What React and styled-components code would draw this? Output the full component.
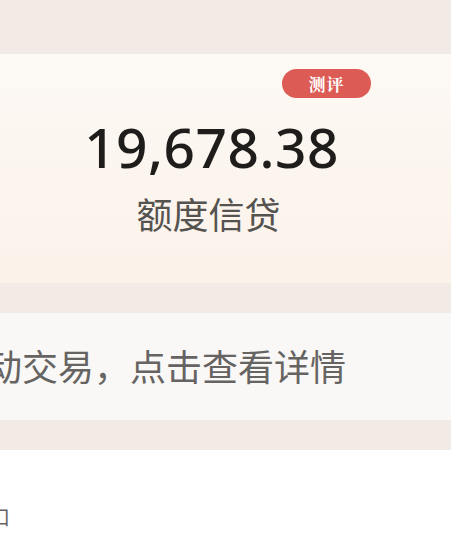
import styled, { createGlobalStyle } from "styled-components";

const GlobalStyle = createGlobalStyle`
  html, body {
    margin: 0;
    padding: 0;
    background: #ffffff;
  }
  body {
    font-family: "Noto Sans", "Noto Sans CJK SC", sans-serif;
    overflow: hidden;
  }
`;

const Page = styled.div`
  width: 451px;
  height: 542px;
  overflow: hidden;
  display: flex;
  flex-direction: column;
  background: #ffffff;
`;

const Gap = styled.div`
  height: ${(p) => p.h}px;
  background: #f2ebe5;
  flex-shrink: 0;
`;

const Card = styled.div`
  height: 229px;
  background: linear-gradient(180deg, #fdf9f4 0%, #fbf2ea 100%);
  display: flex;
  flex-direction: column;
  padding-top: 15px;
  box-sizing: border-box;
`;

const BadgeRow = styled.div`
  display: flex;
  justify-content: flex-end;
  padding-right: 80px;
`;

const Badge = styled.span`
  width: 89px;
  height: 29px;
  border-radius: 15px;
  background: #dc5b55;
  color: #ffffff;
  font-family: "Noto Serif CJK SC", "Noto Sans CJK SC", serif;
  font-weight: 700;
  font-size: 17px;
  display: flex;
  align-items: center;
  justify-content: center;
  letter-spacing: 1px;
`;

const Amount = styled.div`
  margin-top: 16px;
  padding-right: 28px;
  text-align: center;
  font-family: "Noto Sans", sans-serif;
  font-weight: 500;
  font-size: 55px;
  line-height: 66px;
  letter-spacing: 0.5px;
  color: #1f1d1c;
`;

const Label = styled.div`
  margin-top: 11px;
  padding-right: 34px;
  text-align: center;
  font-family: "Noto Sans CJK SC", sans-serif;
  font-size: 36px;
  line-height: 44px;
  color: #555350;
`;

const Notice = styled.div`
  height: 107px;
  padding-bottom: 4px;
  box-sizing: border-box;
  background: #faf8f6;
  display: flex;
  align-items: center;
  overflow: hidden;
`;

const NoticeText = styled.span`
  margin-left: -14px;
  white-space: nowrap;
  font-family: "Noto Sans CJK SC", sans-serif;
  font-size: 36px;
  color: #666462;
`;

const Bottom = styled.div`
  flex: 1;
  background: #ffffff;
  padding-top: 52px;
  overflow: hidden;
`;

const Tail = styled.span`
  display: inline-block;
  margin-left: -10px;
  font-family: "Noto Sans CJK SC", sans-serif;
  font-size: 20px;
  color: #666462;
`;

export default function App() {
  return (
    <Page>
      <GlobalStyle />
      <Gap h={54} />
      <Card>
        <BadgeRow>
          <Badge>测评</Badge>
        </BadgeRow>
        <Amount>19,678.38</Amount>
        <Label>额度信贷</Label>
      </Card>
      <Gap h={30} />
      <Notice>
        <NoticeText>动交易，点击查看详情</NoticeText>
      </Notice>
      <Gap h={30} />
      <Bottom>
        <Tail>口</Tail>
      </Bottom>
    </Page>
  );
}
